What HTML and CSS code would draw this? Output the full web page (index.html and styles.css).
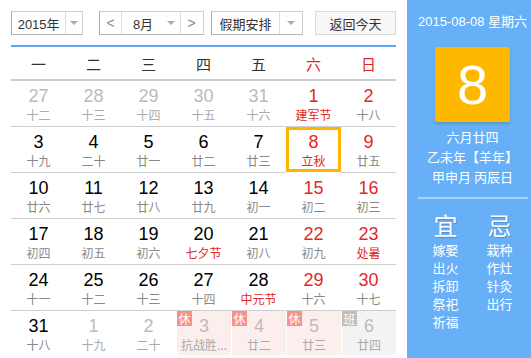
FILE: index.html
```html
<!DOCTYPE html>
<html lang="zh-CN">
<head>
  <meta charset="UTF-8">
  <title>万年历</title>
  <link rel="stylesheet" href="styles.css">
</head>
<body>
  <div class="calendar">
    <div class="main">
      <div class="toolbar">
        <div class="select year-select">
          <span class="select-text">2015年</span>
          <span class="select-arrow"><i></i></span>
        </div>
        <div class="select month-select">
          <span class="month-btn">&lt;</span>
          <span class="select-text">8月</span>
          <span class="select-arrow plain"><i></i></span>
          <span class="month-btn right">&gt;</span>
        </div>
        <div class="select holiday-select">
          <span class="select-text">假期安排</span>
          <span class="select-arrow"><i></i></span>
        </div>
        <div class="today-btn">返回今天</div>
      </div>

      <div class="week-head">
        <span>一</span><span>二</span><span>三</span><span>四</span><span>五</span>
        <span class="weekend">六</span><span class="weekend">日</span>
      </div>

      <div class="days" id="days"></div>
    </div>

    <div class="side">
      <div class="side-date">2015-08-08 星期六</div>
      <div class="side-day">8</div>
      <div class="side-lunar">
        <p>六月廿四</p>
        <p>乙未年【羊年】</p>
        <p>甲申月 丙辰日</p>
      </div>
      <div class="side-line"></div>
      <div class="side-yiji">
        <div class="yiji-col">
          <div class="yiji-title">宜</div>
          <p>嫁娶</p><p>出火</p><p>拆卸</p><p>祭祀</p><p>祈福</p>
        </div>
        <div class="yiji-col">
          <div class="yiji-title">忌</div>
          <p>栽种</p><p>作灶</p><p>针灸</p><p>出行</p>
        </div>
      </div>
    </div>
  </div>

  <script>
    // [日期, 农历/节日, 类型]  o=其他月份 w=周末 f=节日 s=选中 x=休 b=班
    const days = [
      ['27', '十二', 'o'], ['28', '十三', 'o'], ['29', '十四', 'o'], ['30', '十五', 'o'], ['31', '十六', 'o'], ['1', '建军节', 'w f'], ['2', '十八', 'w'],
      ['3', '十九', ''], ['4', '二十', ''], ['5', '廿一', ''], ['6', '廿二', ''], ['7', '廿三', ''], ['8', '立秋', 'w f s'], ['9', '廿五', 'w'],
      ['10', '廿六', ''], ['11', '廿七', ''], ['12', '廿八', ''], ['13', '廿九', ''], ['14', '初一', ''], ['15', '初二', 'w'], ['16', '初三', 'w'],
      ['17', '初四', ''], ['18', '初五', ''], ['19', '初六', ''], ['20', '七夕节', 'f'], ['21', '初八', ''], ['22', '初九', 'w'], ['23', '处暑', 'w f'],
      ['24', '十一', ''], ['25', '十二', ''], ['26', '十三', ''], ['27', '十四', ''], ['28', '中元节', 'f'], ['29', '十六', 'w'], ['30', '十七', 'w'],
      ['31', '十八', ''], ['1', '十九', 'o'], ['2', '二十', 'o'], ['3', '抗战胜...', 'o x'], ['4', '廿二', 'o x'], ['5', '廿三', 'o x'], ['6', '廿四', 'o b']
    ];

    const box = document.getElementById('days');
    days.forEach(function (d) {
      const cell = document.createElement('div');
      const types = d[2].split(' ');
      cell.className = 'day';
      if (types.includes('o')) cell.classList.add('other');
      if (types.includes('w')) cell.classList.add('weekend');
      if (types.includes('f')) cell.classList.add('festival');
      if (types.includes('s')) cell.classList.add('selected');
      if (types.includes('x')) cell.classList.add('rest');
      if (types.includes('b')) cell.classList.add('work');

      let badge = '';
      if (types.includes('x')) badge = '<span class="badge">休</span>';
      if (types.includes('b')) badge = '<span class="badge">班</span>';

      cell.innerHTML = badge + '<span class="num">' + d[0] + '</span><span class="lunar">' + d[1] + '</span>';
      box.appendChild(cell);
    });
  </script>
</body>
</html>
```

FILE: styles.css
```css
body {
  margin: 0;
  font-family: Arial, "Liberation Sans", "Noto Sans CJK SC", sans-serif;
  background: #fff;
  color: #333;
}

.calendar {
  display: flex;
  width: 531px;
  height: 358px;
  overflow: hidden;
}

.main {
  width: 385px;
  padding: 11px 11px 0 11px;
}

/* 顶部工具栏 */
.toolbar {
  display: flex;
  height: 24px;
  font-size: 13px;
}

.select {
  display: flex;
  box-sizing: border-box;
  height: 24px;
  border: 1px solid #cfcfcf;
  border-left-color: #a9a9a9;
  border-bottom-color: #b5b5b5;
  background: #fff;
}

.select-text {
  display: flex;
  align-items: center;
  justify-content: center;
  border-right: 1px solid #dcdcdc;
}

.select-arrow {
  display: flex;
  align-items: center;
  justify-content: center;
}

.select-arrow i {
  width: 0;
  height: 0;
  border-left: 4px solid transparent;
  border-right: 4px solid transparent;
  border-top: 4px solid #aaa;
}

.year-select {
  width: 72px;
}

.year-select .select-text {
  width: 54px;
}

.year-select .select-arrow {
  width: 16px;
}

.month-select {
  width: 105px;
  margin-left: 16px;
}

.month-btn {
  display: flex;
  align-items: center;
  justify-content: center;
  width: 21px;
  color: #888;
  font-size: 14px;
  border-right: 1px solid #dcdcdc;
}

.month-btn.right {
  border-right: none;
  border-left: 1px solid #dcdcdc;
}

.month-select .select-text {
  width: 38px;
  border-right: none;
  padding-left: 2px;
}

.month-select .select-arrow {
  width: 18px;
}

.holiday-select {
  width: 92px;
  margin-left: 7px;
}

.holiday-select .select-text {
  width: 68px;
}

.holiday-select .select-arrow {
  width: 22px;
}

.today-btn {
  box-sizing: border-box;
  width: 81px;
  height: 24px;
  margin-left: 12px;
  border: 1px solid #d9d9d9;
  background: #f7f7f7;
  display: flex;
  align-items: center;
  justify-content: center;
}

/* 星期 */
.week-head {
  display: grid;
  grid-template-columns: repeat(7, 55px);
  margin-top: 10px;
  border-top: 2px solid #5ca9f2;
  border-bottom: 2px solid #cccccc;
  height: 32px;
  align-items: center;
  font-size: 15px;
  text-align: center;
  color: #333;
}

.week-head .weekend {
  color: #e02828;
}

/* 日期 */
.days {
  display: grid;
  grid-template-columns: repeat(7, 55px);
  grid-auto-rows: 46px;
}

.day {
  position: relative;
  box-sizing: border-box;
  border-bottom: 1px solid #cfcfcf;
  display: flex;
  flex-direction: column;
  align-items: center;
  padding-top: 4px;
}

.day:nth-last-child(-n+7) {
  border-bottom: none;
}

.num {
  font-size: 18px;
  line-height: 22px;
  color: #000;
}

.lunar {
  font-family: "Noto Sans CJK SC", sans-serif;
  font-size: 12px;
  line-height: 16px;
  color: #888;
}

.day.weekend .num {
  color: #e02828;
}

.day.festival .lunar {
  color: #e02828;
}

.day.other .num {
  color: #bbb;
}

.day.other .lunar {
  color: #aaa;
}

.day.selected {
  border: 3px solid #ffb400;
  margin-bottom: 1px;
  padding-top: 1px;
}

.day.rest {
  background: #fdeeee;
  border-left: 1px solid #fff;
  margin-bottom: 2px;
}

.day.work {
  background: #f3f3f3;
  border-left: 1px solid #fff;
  margin-bottom: 2px;
}

.badge {
  position: absolute;
  top: 0;
  left: 0;
  width: 15px;
  height: 15px;
  font-family: "Noto Sans CJK SC", sans-serif;
  font-size: 12px;
  line-height: 15px;
  text-align: center;
  color: #fff;
  background: #f7928a;
}

.day.work .badge {
  background: #bdbdbd;
}

/* 右侧面板 */
.side {
  width: 124px;
  padding-left: 7px;
  box-sizing: border-box;
  background: #67b0f8;
  color: #fff;
  text-align: center;
  font-family: "Noto Sans CJK SC", sans-serif;
}

.side-date {
  margin-top: 13px;
  font-family: Arial, "Liberation Sans", "Noto Sans CJK SC", sans-serif;
  font-size: 13px;
  line-height: 18px;
  white-space: nowrap;
}

.side-day {
  width: 75px;
  height: 75px;
  margin: 16px auto 0;
  background: #ffb800;
  border-radius: 2px;
  box-shadow: 0 2px 3px rgba(0, 0, 0, 0.15);
  font-family: Arial, "Liberation Sans", sans-serif;
  font-size: 56px;
  line-height: 75px;
}

.side-lunar {
  margin-top: 5px;
  font-size: 13px;
  line-height: 20px;
  white-space: nowrap;
}

.side-lunar p {
  margin: 0;
}

.side-line {
  width: 110px;
  height: 2px;
  margin: 10px auto 0;
  background: rgba(255, 255, 255, 0.45);
}

.side-yiji {
  display: flex;
  justify-content: center;
  gap: 28px;
  margin-top: 11px;
}

.yiji-title {
  font-size: 24px;
  line-height: 30px;
  margin-bottom: 1px;
  text-shadow: 1px 1px 1px rgba(0, 0, 0, 0.2);
}

.yiji-col p {
  margin: 0;
  font-size: 13px;
  line-height: 18px;
}
```
